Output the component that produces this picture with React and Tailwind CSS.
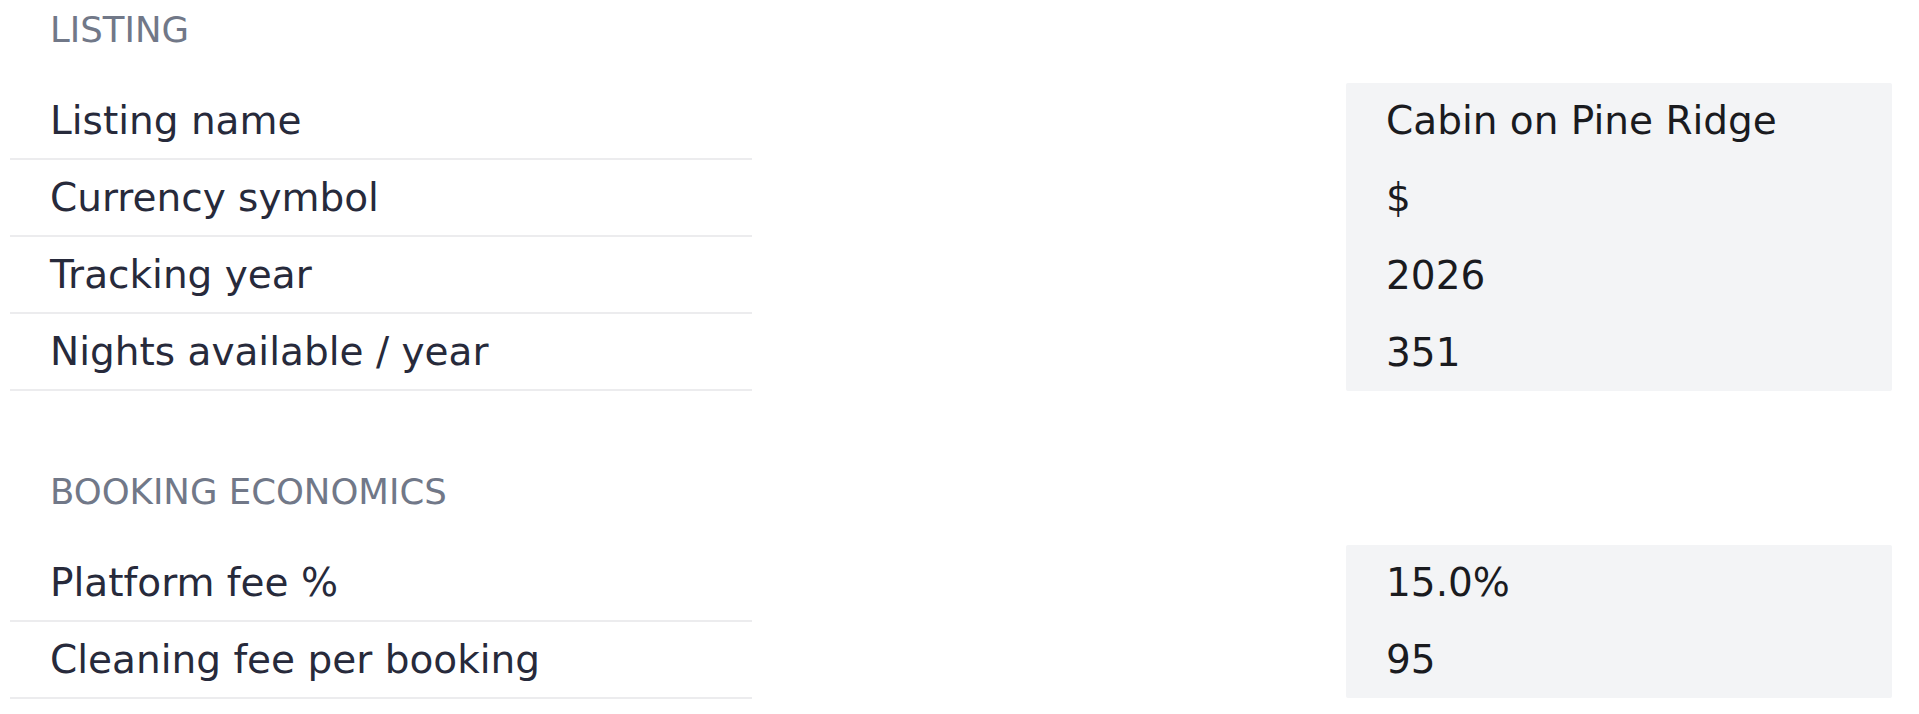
import React from "react";

const sections = [
  {
    title: "LISTING",
    rows: [
      ["Listing name", "Cabin on Pine Ridge"],
      ["Currency symbol", "$"],
      ["Tracking year", "2026"],
      ["Nights available / year", "351"],
    ],
  },
  {
    title: "BOOKING ECONOMICS",
    rows: [
      ["Platform fee %", "15.0%"],
      ["Cleaning fee per booking", "95"],
    ],
  },
];

function Section({ title, rows }) {
  return (
    <section>
      <h2 className="pl-[40px] text-[35.5px] leading-[50px] font-normal text-[#717888] mb-[28px]">
        {title}
      </h2>
      <div className="flex items-start">
        {/* labels */}
        <div className="w-[742px] flex flex-col">
          {rows.map(([label]) => (
            <div
              key={label}
              className="pl-[40px] py-[7.5px] text-[39px] leading-[60px] text-[#272a3b] border-b-[2.5px] border-[#ececee]"
            >
              {label}
            </div>
          ))}
        </div>
        <div className="flex-1" />
        {/* values */}
        <div className="w-[546px] bg-[#f3f4f6] rounded-[2px] flex flex-col gap-[2.5px]">
          {rows.map(([label, value]) => (
            <div
              key={label}
              className="pl-[40px] py-[7.5px] text-[39px] leading-[60px] text-[#1a1b1f]"
            >
              {value}
            </div>
          ))}
        </div>
      </div>
    </section>
  );
}

export default function App() {
  return (
    <div className="min-h-screen bg-white font-['DejaVu_Sans',sans-serif] pl-[10px] pr-[27px] pt-[5px] flex flex-col gap-[76px]">
      {sections.map((s) => (
        <Section key={s.title} title={s.title} rows={s.rows} />
      ))}
    </div>
  );
}
